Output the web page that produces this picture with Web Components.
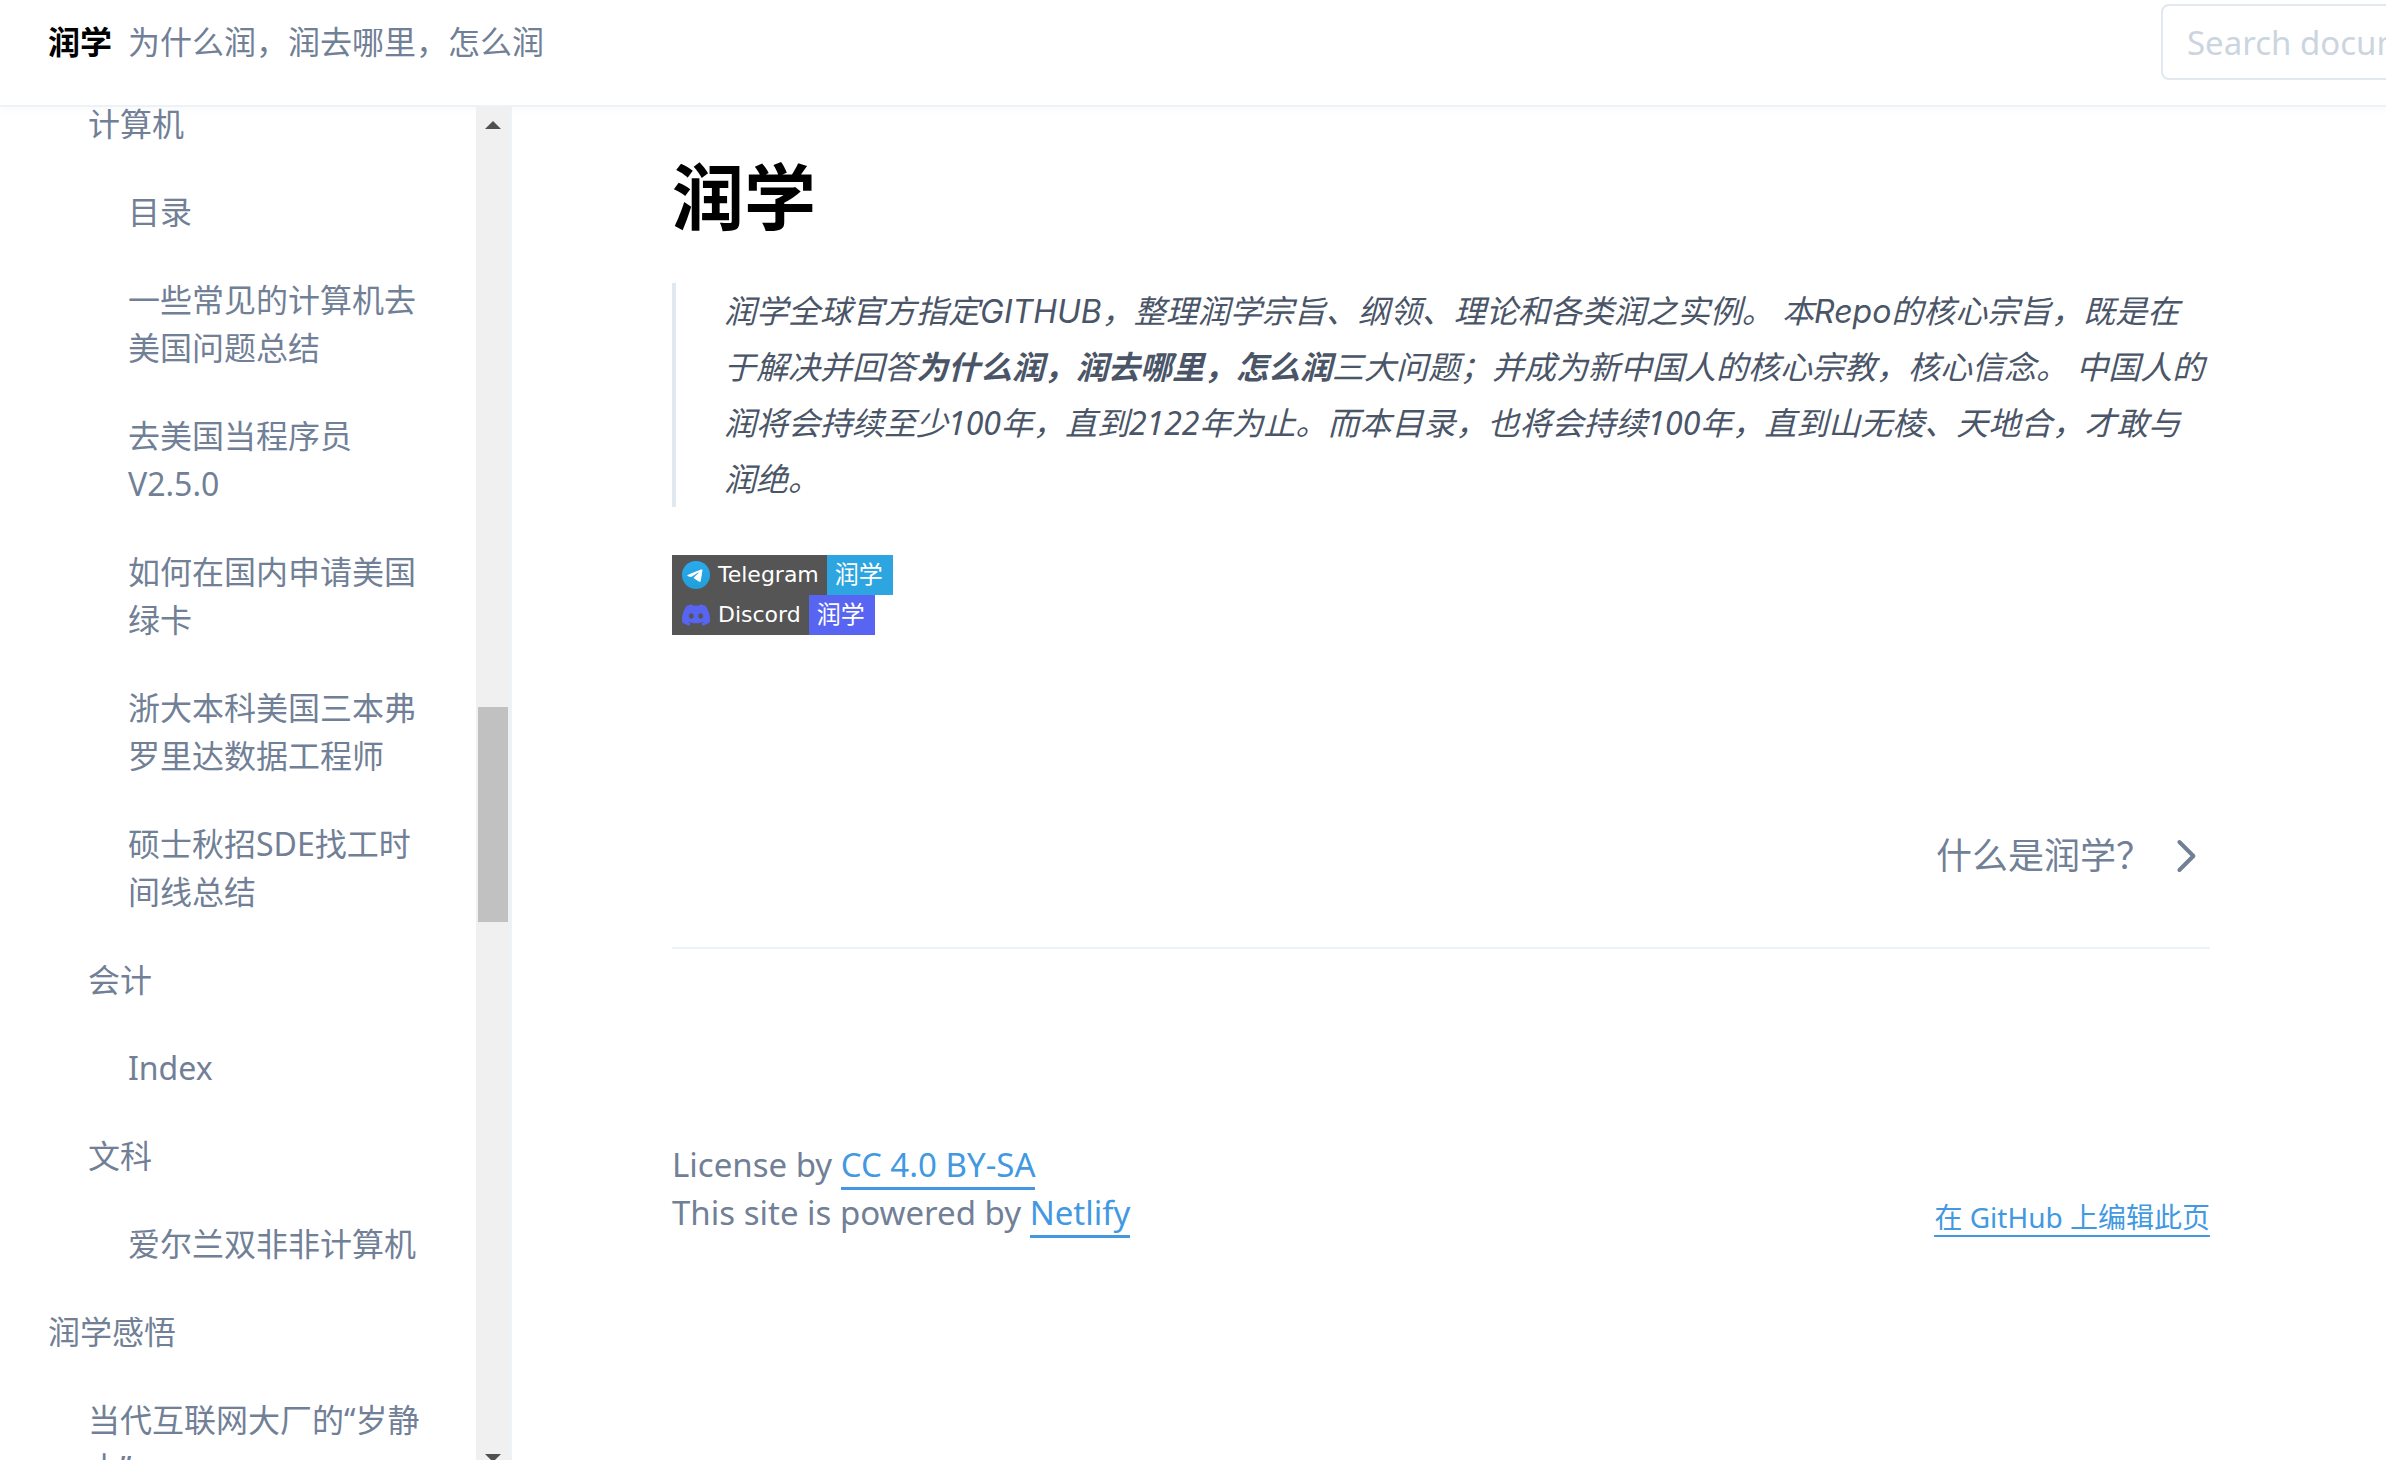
<!DOCTYPE html>
<html lang="zh-CN">
<head>
<meta charset="utf-8">
<title>润学</title>
<style>
html, body { height: 100%; margin: 0; }
body { overflow: hidden; background: #fff; color: #718096; font: 32px/48px "Noto Sans", "Noto Sans CJK SC", sans-serif; }
</style>
</head>
<body>
<docs-app></docs-app>
<script>
const define = (name, html) => {
  const tpl = document.createElement('template');
  tpl.innerHTML = html;
  customElements.define(name, class extends HTMLElement {
    constructor() {
      super();
      this.attachShadow({ mode: 'open' }).append(tpl.content.cloneNode(true));
    }
  });
};

define('docs-header', `
<style>
:host { display: block; flex: none; overflow: hidden; border-bottom: 2px solid #edf2f7; box-shadow: 0 4px 8px rgba(0,0,0,.02); }
header { display: flex; align-items: center; justify-content: space-between; width: calc(100% + 160px); padding: 4px 0 25px 48px; box-sizing: border-box; }
a { display: flex; gap: 16px; color: inherit; text-decoration: none; }
b { color: #000; }
input { box-sizing: border-box; width: 385px; height: 76px; padding: 0 24px; border: 2px solid #e2e8f0; border-radius: 8px; background: #fff; font: inherit; font-size: 33px; color: #4a5568; }
input::placeholder { color: #cbd5e0; opacity: 1; }
</style>
<header>
  <a href="#"><b>润学</b><span>为什么润，润去哪里，怎么润</span></a>
  <input type="search" aria-label="Search documentation" placeholder="Search documentation...">
</header>`);

define('nav-item', `
<style>
:host { display: block; padding-left: 48px; }
:host([level="1"]) { padding-left: 88px; }
:host([level="2"]) { padding-left: 128px; }
a { display: block; padding: 20px 48px 20px 0; color: #718096; text-decoration: none; }
</style>
<a href="#"><slot></slot></a>`);

define('side-scrollbar', `
<style>
:host { display: flex; flex-direction: column; align-items: center; width: 34px; background: #f0f0f0; padding-top: 14px; box-sizing: border-box; }
.up, .down { width: 0; border: 8px solid transparent; }
.up { border-top: 0; border-bottom-color: #505050; }
.down { border-bottom: 0; border-top-color: #505050; }
.track { flex: 1; width: 30px; display: flex; flex-direction: column; }
.before { flex: 578; } .thumb { flex: 215; background: #c1c1c1; } .after { flex: 532; }
.down { margin-bottom: -2px; }
</style>
<div class="up"></div>
<div class="track"><div class="before"></div><div class="thumb"></div><div class="after"></div></div>
<div class="down"></div>`);

define('docs-sidebar', `
<style>
:host { display: flex; flex: none; width: 512px; box-sizing: border-box; overflow: hidden; border-right: 2px solid #edf2f7; }
nav { flex: 1; min-width: 0; overflow: hidden; }
.list { margin-top: -27px; }
</style>
<nav><div class="list">
  <nav-item level="1">计算机</nav-item>
  <nav-item level="2">目录</nav-item>
  <nav-item level="2">一些常见的计算机去美国问题总结</nav-item>
  <nav-item level="2">去美国当程序员 V2.5.0</nav-item>
  <nav-item level="2">如何在国内申请美国绿卡</nav-item>
  <nav-item level="2">浙大本科美国三本弗罗里达数据工程师</nav-item>
  <nav-item level="2">硕士秋招SDE找工时间线总结</nav-item>
  <nav-item level="1">会计</nav-item>
  <nav-item level="2">Index</nav-item>
  <nav-item level="1">文科</nav-item>
  <nav-item level="2">爱尔兰双非非计算机</nav-item>
  <nav-item>润学感悟</nav-item>
  <nav-item level="1">当代互联网大厂的“岁静小”</nav-item>
</div></nav>
<side-scrollbar></side-scrollbar>`);

define('chat-badge', `
<style>
:host { display: block; font: 22px/40px "DejaVu Sans", "Noto Sans CJK SC", sans-serif; --tone: #2ca5e0; }
a { display: inline-flex; vertical-align: top; color: #fff; text-decoration: none; }
.label { display: flex; align-items: center; gap: 8px; padding: 0 8px 0 10px; background: #555; }
.value { padding: 0 10px 0 8px; background: var(--tone); font-size: 24px; }
</style>
<a href="#"><span class="label"><slot name="icon"></slot><slot></slot></span><span class="value">润学</span></a>`);

define('docs-quote', `
<style>
:host { display: block; }
blockquote { margin: 0; padding-left: 48px; border-left: 4px solid #e2e8f0; color: #4a5568; font-style: italic; line-height: 56px; }
</style>
<blockquote><slot></slot></blockquote>`);

define('next-page', `
<style>
:host { display: flex; justify-content: flex-end; padding-bottom: 63px; border-bottom: 2px solid #edf2f7; }
a { display: flex; align-items: center; gap: 10px; font-size: 36px; line-height: 56px; color: #718096; text-decoration: none; }
svg { width: 48px; height: 48px; fill: none; stroke: currentColor; stroke-width: 2; stroke-linecap: round; stroke-linejoin: round; }
</style>
<a href="#"><slot></slot><svg viewBox="0 0 24 24" aria-hidden="true"><path d="M8.700 5l7 7-7 7"/></svg></a>`);

define('docs-footer', `
<style>
:host { display: flex; justify-content: space-between; align-items: flex-end; font-size: 33px; }
a { color: #4299e1; text-decoration: none; border-bottom: 3px solid #4299e1; }
.edit { font-size: 28px; line-height: 36px; border-bottom-width: 2px; }
</style>
<div>License by <a href="#">CC 4.0 BY-SA</a><br>This site is powered by <a href="#">Netlify</a></div>
<a class="edit" href="#">在 GitHub 上编辑此页</a>`);

define('docs-article', `
<style>
:host { display: block; flex: 1; min-width: 0; padding: 41px 176px 0 160px; }
h1 { margin: 0; font-size: 72px; line-height: 96px; color: #000; }
docs-quote { margin: 39px 0 48px; }
.name { font-family: Inter, sans-serif; line-height: 1; }
next-page { margin-top: 193px; }
docs-footer { margin-top: 192px; }
svg { width: 28px; height: 28px; display: block; }
.discord { --tone: #5865f2; }
</style>
<h1>润学</h1>
<docs-quote>润学全球官方指定<span class="name">GITHUB</span>，整理润学宗旨、纲领、理论和各类润之实例。 本<span class="name">Repo</span>的核心宗旨，既是在于解决并回答<strong>为什么润，润去哪里，怎么润</strong>三大问题；并成为新中国人的核心宗教，核心信念。 中国人的润将会持续至少100年，直到2122年为止。而本目录，也将会持续100年，直到山无棱、天地合，才敢与润绝。</docs-quote>
<chat-badge><svg slot="icon" viewBox="0 0 240 240" aria-hidden="true"><defs><linearGradient id="tg" x1="0" y1="0" x2="0" y2="1"><stop stop-color="#2aabee"/><stop offset="1" stop-color="#229ed9"/></linearGradient></defs><circle cx="120" cy="120" r="120" fill="url(#tg)"/><path fill="#fff" d="M54 118.800C89 103.500 112.400 93.500 124 88.600c33.400-13.900 40.300-16.300 44.800-16.400 1 0 3.200.200 4.700 1.400 2 1.600 1.600 4 1.600 6.300-1.800 19-9.600 65.100-13.600 86.300-1.700 9-5 12-8.200 12.300-7 .600-12.300-4.600-19-9-10.600-6.900-16.500-11.200-26.800-18-11.800-7.800-4.100-12.100 2.600-19.100 1.800-1.800 32.500-29.700 33-32.300.300-1.300-1-2.700-2.700-1.800-2 .500-19 12-51 33-5 3-9 5-13 5-4 0-12-2.400-18-4.400-7-2-13-3.500-12.500-7.500.300-2 3-4 8.100-5.600z"/></svg>Telegram</chat-badge>
<chat-badge class="discord"><svg slot="icon" viewBox="0 0 24 24" aria-hidden="true"><path fill="#5865f2" d="M20.317 4.370a19.791 19.791 0 0 0-4.885-1.515.074.074 0 0 0-.079.037c-.210.375-.444.864-.608 1.250a18.270 18.270 0 0 0-5.487 0 12.640 12.640 0 0 0-.617-1.250.077.077 0 0 0-.079-.037A19.736 19.736 0 0 0 3.677 4.370a.070.070 0 0 0-.032.027C.533 9.046-.320 13.580.099 18.058a.082.082 0 0 0 .031.056 19.900 19.900 0 0 0 5.993 3.030.078.078 0 0 0 .084-.028 14.090 14.090 0 0 0 1.226-1.994.076.076 0 0 0-.041-.106 13.107 13.107 0 0 1-1.872-.892.077.077 0 0 1-.008-.128 10.200 10.200 0 0 0 .372-.292.074.074 0 0 1 .077-.010c3.928 1.793 8.180 1.793 12.062 0a.074.074 0 0 1 .078.010c.120.098.246.198.373.292a.077.077 0 0 1-.006.127 12.299 12.299 0 0 1-1.873.892.077.077 0 0 0-.041.107c.360.698.772 1.362 1.225 1.993a.076.076 0 0 0 .084.028 19.839 19.839 0 0 0 6.002-3.030.077.077 0 0 0 .032-.054c.500-5.177-.838-9.674-3.549-13.660a.061.061 0 0 0-.031-.030zM8.020 15.330c-1.183 0-2.157-1.085-2.157-2.419 0-1.333.956-2.419 2.157-2.419 1.210 0 2.176 1.096 2.157 2.420 0 1.333-.956 2.418-2.157 2.418zm7.975 0c-1.183 0-2.157-1.085-2.157-2.419 0-1.333.955-2.419 2.157-2.419 1.210 0 2.176 1.096 2.157 2.420 0 1.333-.946 2.418-2.157 2.418z"/></svg>Discord</chat-badge>
<next-page>什么是润学？</next-page>
<docs-footer></docs-footer>`);

define('docs-app', `
<style>
:host { display: flex; flex-direction: column; height: 100vh; }
main { flex: 1; min-height: 0; display: flex; }
</style>
<docs-header></docs-header>
<main><docs-sidebar></docs-sidebar><docs-article></docs-article></main>`);
</script>
</body>
</html>
